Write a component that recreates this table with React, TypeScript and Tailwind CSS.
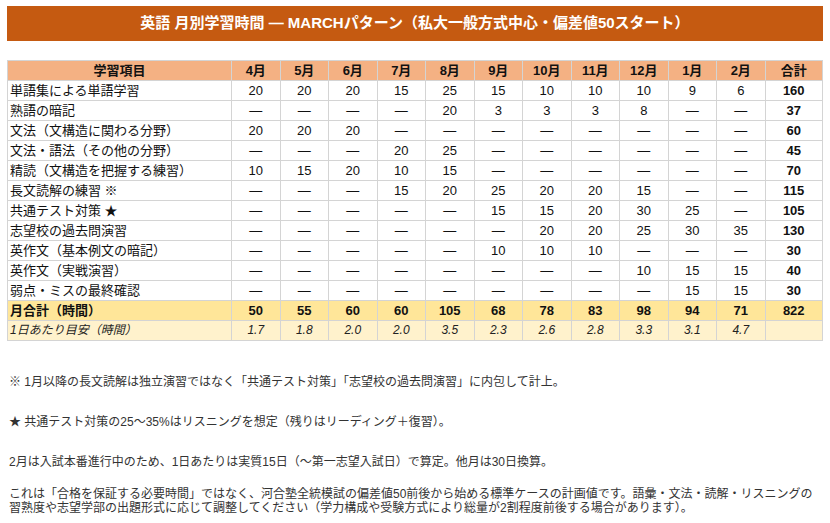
import React from "react"

const months = ["4月", "5月", "6月", "7月", "8月", "9月", "10月", "11月", "12月", "1月", "2月"]

const D = "—"

const rows: { name: string; values: (number | string)[]; total: number }[] = [
    { name: "単語集による単語学習", values: [20, 20, 20, 15, 25, 15, 10, 10, 10, 9, 6], total: 160 },
    { name: "熟語の暗記", values: [D, D, D, D, 20, 3, 3, 3, 8, D, D], total: 37 },
    { name: "文法（文構造に関わる分野）", values: [20, 20, 20, D, D, D, D, D, D, D, D], total: 60 },
    { name: "文法・語法（その他の分野）", values: [D, D, D, 20, 25, D, D, D, D, D, D], total: 45 },
    { name: "精読（文構造を把握する練習）", values: [10, 15, 20, 10, 15, D, D, D, D, D, D], total: 70 },
    { name: "長文読解の練習 ※", values: [D, D, D, 15, 20, 25, 20, 20, 15, D, D], total: 115 },
    { name: "共通テスト対策 ★", values: [D, D, D, D, D, 15, 15, 20, 30, 25, D], total: 105 },
    { name: "志望校の過去問演習", values: [D, D, D, D, D, D, 20, 20, 25, 30, 35], total: 130 },
    { name: "英作文（基本例文の暗記）", values: [D, D, D, D, D, 10, 10, 10, D, D, D], total: 30 },
    { name: "英作文（実戦演習）", values: [D, D, D, D, D, D, D, D, 10, 15, 15], total: 40 },
    { name: "弱点・ミスの最終確認", values: [D, D, D, D, D, D, D, D, D, 15, 15], total: 30 },
]

const monthTotals = [50, 55, 60, 60, 105, 68, 78, 83, 98, 94, 71]
const perDay = ["1.7", "1.8", "2.0", "2.0", "3.5", "2.3", "2.6", "2.8", "3.3", "3.1", "4.7"]

const font = { fontFamily: '"Liberation Sans", "Noto Sans CJK JP", sans-serif' }

const cell = "border border-[#d4d4d4] h-[20px] p-0 leading-[19px]"

export default function App() {
    return (
        <div className="w-[830px] h-[523px] bg-white px-[7px] pt-[6px] text-[#111]" style={font}>

            {/* Title */}
            <div className="h-[35px] bg-[#c55a11] flex items-center justify-center">
                <h1 className="text-white font-bold text-[15px]">
                    英語 月別学習時間 — MARCHパターン（私大一般方式中心・偏差値50スタート）
                </h1>
            </div>

            {/* Table */}
            <table className="mt-[19px] w-[816px] table-fixed border-collapse text-[13px]">
                <colgroup>
                    <col className="w-[224px]" />
                    {months.map(m => <col key={m} className="w-[48.5px]" />)}
                    <col />
                </colgroup>
                <thead>
                    <tr className="bg-[#f4b183] font-bold">
                        <th className={cell + " text-center"}>学習項目</th>
                        {months.map(m => (
                            <th key={m} className={cell + " text-center"}>{m}</th>
                        ))}
                        <th className={cell + " text-center"}>合計</th>
                    </tr>
                </thead>
                <tbody>
                    {rows.map(r => (
                        <tr key={r.name}>
                            <td className={cell + " pl-[2px] text-left whitespace-nowrap"}>{r.name}</td>
                            {r.values.map((v, i) => (
                                <td key={i} className={cell + " text-center"}>{v}</td>
                            ))}
                            <td className={cell + " text-center font-bold"}>{r.total}</td>
                        </tr>
                    ))}
                    <tr className="bg-[#ffe699] font-bold">
                        <td className={cell + " pl-[2px] text-left"}>月合計（時間）</td>
                        {monthTotals.map((v, i) => (
                            <td key={i} className={cell + " text-center"}>{v}</td>
                        ))}
                        <td className={cell + " text-center"}>822</td>
                    </tr>
                    <tr className="bg-[#fff2cc] italic text-[12px] text-[#222]">
                        <td className={cell + " pl-[2px] text-left"}>1日あたり目安（時間）</td>
                        {perDay.map((v, i) => (
                            <td key={i} className={cell + " text-center"}>{v}</td>
                        ))}
                        <td className={cell}></td>
                    </tr>
                </tbody>
            </table>

            {/* Notes */}
            <div className="text-[12px] text-[#333] leading-[14px] pl-[2px]">
                <p className="mt-[34px]">※ 1月以降の長文読解は独立演習ではなく「共通テスト対策」「志望校の過去問演習」に内包して計上。</p>
                <p className="mt-[26px]">★ 共通テスト対策の25〜35%はリスニングを想定（残りはリーディング＋復習）。</p>
                <p className="mt-[26px]">2月は入試本番進行中のため、1日あたりは実質15日（〜第一志望入試日）で算定。他月は30日換算。</p>
                <p className="mt-[18px]">
                    これは「合格を保証する必要時間」ではなく、河合塾全統模試の偏差値50前後から始める標準ケースの計画値です。語彙・文法・読解・リスニングの習熟度や志望学部の出題形式に応じて調整してください（学力構成や受験方式により総量が2割程度前後する場合があります）。
                </p>
            </div>

        </div>
    )
}
